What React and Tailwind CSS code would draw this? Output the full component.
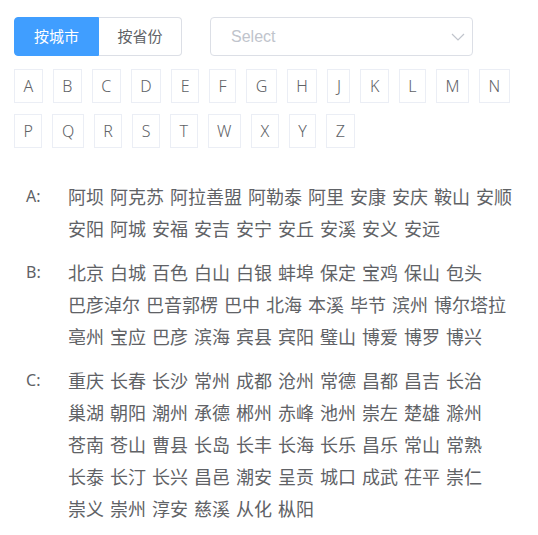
import React, { useState } from 'react';

const letters = ['A', 'B', 'C', 'D', 'E', 'F', 'G', 'H', 'J', 'K', 'L', 'M', 'N', 'P', 'Q', 'R', 'S', 'T', 'W', 'X', 'Y', 'Z'];

const groups = [
  {
    letter: 'A',
    cities: ['阿坝', '阿克苏', '阿拉善盟', '阿勒泰', '阿里', '安康', '安庆', '鞍山', '安顺', '安阳', '阿城', '安福', '安吉', '安宁', '安丘', '安溪', '安义', '安远'],
  },
  {
    letter: 'B',
    cities: ['北京', '白城', '百色', '白山', '白银', '蚌埠', '保定', '宝鸡', '保山', '包头', '巴彦淖尔', '巴音郭楞', '巴中', '北海', '本溪', '毕节', '滨州', '博尔塔拉', '亳州', '宝应', '巴彦', '滨海', '宾县', '宾阳', '璧山', '博爱', '博罗', '博兴'],
  },
  {
    letter: 'C',
    cities: ['重庆', '长春', '长沙', '常州', '成都', '沧州', '常德', '昌都', '昌吉', '长治', '巢湖', '朝阳', '潮州', '承德', '郴州', '赤峰', '池州', '崇左', '楚雄', '滁州', '苍南', '苍山', '曹县', '长岛', '长丰', '长海', '长乐', '昌乐', '常山', '常熟', '长泰', '长汀', '长兴', '昌邑', '潮安', '呈贡', '城口', '成武', '茌平', '崇仁', '崇义', '崇州', '淳安', '慈溪', '从化', '枞阳'],
  },
];

const App = () => {
  const [mode, setMode] = useState('city');

  return (
    <div className="w-[538px] min-h-[535px] bg-white pt-[17px] pl-[14px] text-[#606266] font-['Noto_Sans','Noto_Sans_CJK_SC',sans-serif]">
      {/* 顶部切换 + 下拉 */}
      <div className="flex items-center">
        <div className="flex h-[39px]">
          <button
            onClick={() => setMode('city')}
            className={`w-[85px] rounded-l-[4px] border text-[15px] ${
              mode === 'city' ? 'bg-[#409eff] border-[#409eff] text-white' : 'bg-white border-[#dcdfe6] text-[#606266]'
            }`}
          >
            按城市
          </button>
          <button
            onClick={() => setMode('province')}
            className={`w-[83px] rounded-r-[4px] border border-l-0 text-[15px] ${
              mode === 'province' ? 'bg-[#409eff] border-[#409eff] text-white' : 'bg-white border-[#dcdfe6] text-[#606266]'
            }`}
          >
            按省份
          </button>
        </div>
        <div className="ml-[28px] w-[263px] h-[39px] flex items-center justify-between rounded-[4px] border border-[#dcdfe6] pl-[20px] pr-[7px]">
          <span className="text-[16px] text-[#c0c4cc] font-['Liberation_Sans',sans-serif]">Select</span>
          <svg width="14" height="8" viewBox="0 0 14 8" fill="none">
            <path d="M1 1l6 6 6-6" stroke="#c0c4cc" strokeWidth="1.2" />
          </svg>
        </div>
      </div>

      {/* 字母索引 */}
      <div className="mt-[13px] w-[512px] flex flex-wrap gap-x-[10px] gap-y-[11px]">
        {letters.map((l) => (
          <div
            key={l}
            className="h-[34px] px-[8.5px] flex items-center border border-[#ebeef5] text-[16px] font-light text-[#606266] cursor-pointer"
          >
            {l}
          </div>
        ))}
      </div>

      {/* 城市列表 */}
      <div className="mt-[32px] pl-[12px] flex flex-col gap-[12px] pb-[10px]">
        {groups.map((g) => (
          <div key={g.letter} className="flex">
            <div className="w-[42px] shrink-0 text-[16px] leading-[32px]">{g.letter}:</div>
            <div className="w-[450px] flex flex-wrap gap-x-[6px] text-[18px] leading-[32px] font-['Noto_Sans_CJK_SC',sans-serif]">
              {g.cities.map((c) => (
                <span key={c} className="cursor-pointer">{c}</span>
              ))}
            </div>
          </div>
        ))}
      </div>
    </div>
  );
};

export default App;
